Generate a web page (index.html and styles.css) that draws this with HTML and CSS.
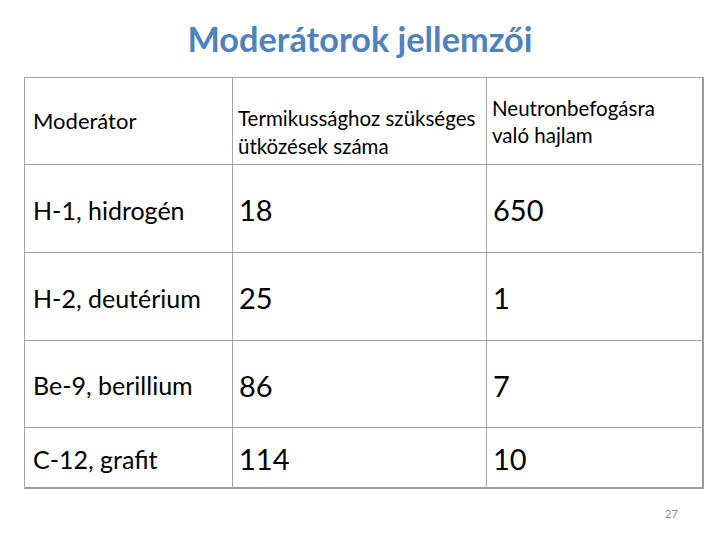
FILE: index.html
```html
<!DOCTYPE html>
<html>
<head>
<meta charset="utf-8">
<link rel="stylesheet" href="styles.css">
</head>
<body>
<div class="slide">
  <h1 class="title">Moderátorok jellemzői</h1>
  <div class="grid">
    <div class="cell head mid">Moderátor</div>
    <div class="cell head low">Termikussághoz szükséges<br>ütközések száma</div>
    <div class="cell head top end">Neutronbefogásra<br>való hajlam</div>

    <div class="cell name">H-1, hidrogén</div>
    <div class="cell num">18</div>
    <div class="cell num end">650</div>

    <div class="cell name">H-2, deutérium</div>
    <div class="cell num">25</div>
    <div class="cell num end">1</div>

    <div class="cell name">Be-9, berillium</div>
    <div class="cell num">86</div>
    <div class="cell num end">7</div>

    <div class="cell name last">C-12, grafit</div>
    <div class="cell num last">114</div>
    <div class="cell num end last">10</div>
  </div>
  <div class="page">27</div>
</div>
</body>
</html>
```
FILE: styles.css
```css
html, body { margin: 0; padding: 0; background: #fff; }
.slide {
  width: 720px; height: 540px; position: relative;
  font-family: Lato, "Open Sans", sans-serif; color: #000;
}
.title {
  margin: 0; padding-top: 19px; height: 58px; box-sizing: border-box;
  text-align: center; font-size: 34.3px; font-weight: bold; color: #4f81bd;
  line-height: 40px;
}
.grid {
  margin: 19px 0 0 24px; width: 679px;
  display: grid;
  grid-template-columns: 208px 254px 217px;
  grid-template-rows: 87px 88px 88px 87px 61px;
  border-top: 1px solid #a6a6a6; border-left: 1px solid #a6a6a6;
}
.cell {
  border-right: 1px solid #a6a6a6; border-bottom: 1px solid #a6a6a6;
  display: flex; align-items: center; padding: 0 8px;
}
.cell.end { border-right: 2px solid #9c9c9c; }
.cell.last { border-bottom: 2px solid #9c9c9c; }
.head { font-size: 20.5px; line-height: 28px; }
.head.mid { font-size: 22px; padding-top: 0; }
.head.low { align-items: flex-start; padding-top: 26px; padding-left: 5px; }
.head.top { align-items: flex-start; padding-top: 17px; padding-left: 5px; line-height: 27px; }
.name { font-size: 25px; padding-top: 2px; }
.num { font-size: 29px; padding-left: 6px; padding-top: 2px; }
.page {
  position: absolute; left: 665px; top: 507px; font-size: 11px; color: #8c8c8c;
}
```
